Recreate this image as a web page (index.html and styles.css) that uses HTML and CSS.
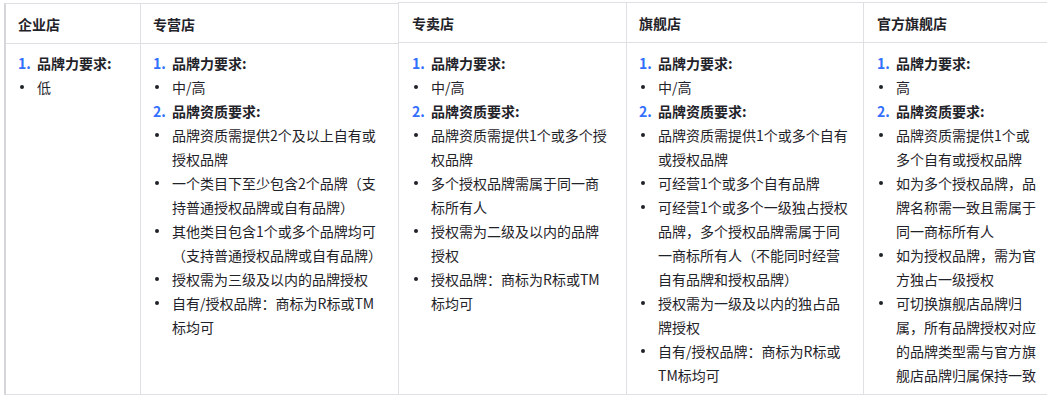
FILE: index.html
```html
<!DOCTYPE html>
<html lang="zh-CN">
<head>
<meta charset="utf-8">
<title>店铺类型品牌要求</title>
<link rel="stylesheet" href="styles.css">
</head>
<body>
<div class="page">
  <div class="tbl tbl-a">
    <div class="th sep h1">企业店</div>
    <div class="th h2">专营店</div>
    <div class="td sep c1">
      <div class="li"><span class="mk num">1.</span><span class="tx"><b>品牌力要求:</b></span></div>
      <div class="li"><span class="mk"><i class="dot"></i></span><span class="tx">低</span></div>
    </div>
    <div class="td c2">
      <div class="li"><span class="mk num">1.</span><span class="tx"><b>品牌力要求:</b></span></div>
      <div class="li"><span class="mk"><i class="dot"></i></span><span class="tx">中/高</span></div>
      <div class="li"><span class="mk num">2.</span><span class="tx"><b>品牌资质要求:</b></span></div>
      <div class="li"><span class="mk"><i class="dot"></i></span><span class="tx">品牌资质需提供2个及以上自有或授权品牌</span></div>
      <div class="li"><span class="mk"><i class="dot"></i></span><span class="tx">一个类目下至少包含2个品牌（支持普通授权品牌或自有品牌）</span></div>
      <div class="li"><span class="mk"><i class="dot"></i></span><span class="tx">其他类目包含1个或多个品牌均可（支持普通授权品牌或自有品牌）</span></div>
      <div class="li"><span class="mk"><i class="dot"></i></span><span class="tx">授权需为三级及以内的品牌授权</span></div>
      <div class="li"><span class="mk"><i class="dot"></i></span><span class="tx">自有/授权品牌：商标为R标或TM标均可</span></div>
    </div>
  </div>
  <div class="tbl tbl-b">
    <div class="th sep h3">专卖店</div>
    <div class="th sep h4">旗舰店</div>
    <div class="th h5">官方旗舰店</div>
    <div class="td sep c3">
      <div class="li"><span class="mk num">1.</span><span class="tx"><b>品牌力要求:</b></span></div>
      <div class="li"><span class="mk"><i class="dot"></i></span><span class="tx">中/高</span></div>
      <div class="li"><span class="mk num">2.</span><span class="tx"><b>品牌资质要求:</b></span></div>
      <div class="li"><span class="mk"><i class="dot"></i></span><span class="tx">品牌资质需提供1个或多个授权品牌</span></div>
      <div class="li"><span class="mk"><i class="dot"></i></span><span class="tx">多个授权品牌需属于同一商标所有人</span></div>
      <div class="li"><span class="mk"><i class="dot"></i></span><span class="tx">授权需为二级及以内的品牌授权</span></div>
      <div class="li"><span class="mk"><i class="dot"></i></span><span class="tx">授权品牌：商标为R标或TM标均可</span></div>
    </div>
    <div class="td sep c4">
      <div class="li"><span class="mk num">1.</span><span class="tx"><b>品牌力要求:</b></span></div>
      <div class="li"><span class="mk"><i class="dot"></i></span><span class="tx">中/高</span></div>
      <div class="li"><span class="mk num">2.</span><span class="tx"><b>品牌资质要求:</b></span></div>
      <div class="li"><span class="mk"><i class="dot"></i></span><span class="tx">品牌资质需提供1个或多个自有或授权品牌</span></div>
      <div class="li"><span class="mk"><i class="dot"></i></span><span class="tx">可经营1个或多个自有品牌</span></div>
      <div class="li"><span class="mk"><i class="dot"></i></span><span class="tx">可经营1个或多个一级独占授权品牌，多个授权品牌需属于同一商标所有人（不能同时经营自有品牌和授权品牌）</span></div>
      <div class="li"><span class="mk"><i class="dot"></i></span><span class="tx">授权需为一级及以内的独占品牌授权</span></div>
      <div class="li"><span class="mk"><i class="dot"></i></span><span class="tx">自有/授权品牌：商标为R标或TM标均可</span></div>
    </div>
    <div class="td c5">
      <div class="li"><span class="mk num">1.</span><span class="tx"><b>品牌力要求:</b></span></div>
      <div class="li"><span class="mk"><i class="dot"></i></span><span class="tx">高</span></div>
      <div class="li"><span class="mk num">2.</span><span class="tx"><b>品牌资质要求:</b></span></div>
      <div class="li"><span class="mk"><i class="dot"></i></span><span class="tx">品牌资质需提供1个或多个自有或授权品牌</span></div>
      <div class="li"><span class="mk"><i class="dot"></i></span><span class="tx">如为多个授权品牌，品牌名称需一致且需属于同一商标所有人</span></div>
      <div class="li"><span class="mk"><i class="dot"></i></span><span class="tx">如为授权品牌，需为官方独占一级授权</span></div>
      <div class="li"><span class="mk"><i class="dot"></i></span><span class="tx">可切换旗舰店品牌归属，所有品牌授权对应的品牌类型需与官方旗舰店品牌归属保持一致</span></div>
    </div>
  </div>
</div>
</body>
</html>
```
FILE: styles.css
```css
* {
  box-sizing: border-box;
}

body {
  margin: 0;
  background: #ffffff;
  font-family: "Noto Sans CJK SC", "Microsoft YaHei", sans-serif;
  font-size: 14px;
  color: #1f2329;
}

.page {
  display: flex;
  align-items: flex-start;
}

.tbl {
  display: grid;
  border-top: 1px solid #dee0e3;
  border-bottom: 1px solid #dee0e3;
}

.tbl-a {
  margin-left: 4px;
  margin-top: 3px;
  border-left: 2px solid #d4d6d9;
  grid-template-columns: 135px 257px;
  grid-template-rows: 40px 350px;
}

.tbl-b {
  margin-top: 2px;
  border-left: 1px solid #dee0e3;
  grid-template-columns: 228px 237px 183px;
  grid-template-rows: 40px 351px;
}

.th {
  display: flex;
  align-items: center;
  padding-left: 12px;
  font-weight: bold;
  line-height: 24px;
  border-bottom: 1px solid #dee0e3;
}

.h3 { padding-left: 13px; }

.sep {
  border-right: 1px solid #dee0e3;
}

.td {
  padding-top: 7px;
  padding-left: 12px;
  line-height: 24px;
}

.tbl-b .td {
  padding-top: 8px;
}

.c1 { padding-right: 14px; }
.c2 { padding-right: 14px; }
.c3 { padding-left: 13px; padding-right: 16px; }
.c4 { padding-right: 12px; }
.c5 { padding-left: 13px; padding-right: 7px; }
.h5 { padding-left: 13px; }

.li {
  display: flex;
  align-items: flex-start;
}

.mk {
  flex: 0 0 19px;
  width: 19px;
  height: 24px;
  display: flex;
  align-items: center;
}

.num {
  color: #3370ff;
  font-weight: bold;
}

.dot {
  display: block;
  width: 4px;
  height: 4px;
  margin-left: 2px;
  border-radius: 50%;
  background: #1f2329;
}

.tx {
  flex: 1 1 auto;
  min-width: 0;
}

.tx b {
  font-weight: bold;
}
```
